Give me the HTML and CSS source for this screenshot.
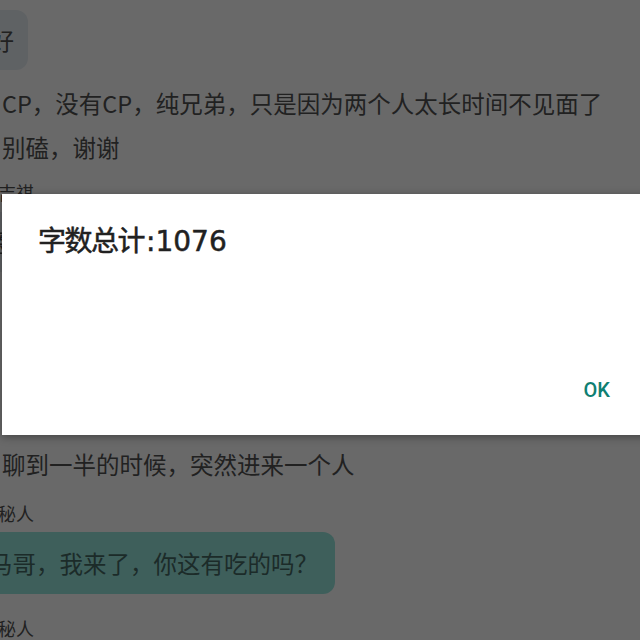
FILE: index.html
```html
<!DOCTYPE html>
<html lang="zh-CN">
<head>
    <meta charset="UTF-8">
    <meta name="viewport" content="width=device-width, initial-scale=1.0">
    <title>字数统计</title>
    <link rel="stylesheet" href="styles.css">
</head>
<body>
    <div class="chat">
        <div class="bubble bubble-gray first">你好</div>
        <p class="line line-a">CP，没有CP，纯兄弟，只是因为两个人太长时间不见面了</p>
        <p class="line line-b">别磕，谢谢</p>
        <div class="name name-a">张吉祺</div>
        <div class="bubble bubble-gray hidden-row">嗯</div>
        <p class="line line-c">然后他们两个就开始聊天</p>
        <p class="line line-d">聊到一半的时候，突然进来一个人</p>
        <div class="name name-b">神秘人</div>
        <div class="bubble bubble-teal">马哥，我来了，你这有吃的吗？</div>
        <div class="name name-c">神秘人</div>
    </div>

    <div class="scrim"></div>

    <div class="dialog">
        <div class="dialog-title"><span class="title-cjk">字数总计</span>:1076</div>
        <div class="dialog-actions">
            <span class="dialog-button">OK</span>
        </div>
    </div>
</body>
</html>
```

FILE: styles.css
```css
body, html {
    margin: 0;
    padding: 0;
    width: 640px;
    height: 640px;
    overflow: hidden;
    background-color: #ffffff;
    font-family: 'Noto Sans CJK SC', 'Noto Sans', sans-serif;
}
.chat {
    display: flex;
    flex-direction: column;
    align-items: flex-start;
    padding-left: 2px;
    color: #525252;
}
.bubble {
    font-size: 23.5px;
    line-height: 32px;
    border-radius: 12px;
    white-space: nowrap;
}
.bubble-gray {
    background-color: #e7eef3;
    padding: 14px 14px;
}
.bubble.first {
    margin-top: 10px;
    margin-left: -49px;
}
.bubble-teal {
    background-color: #98e6de;
    color: #456a65;
    padding: 15px 17px 15px 20px;
    margin-left: -33px;
    margin-top: 7px;
}
.line {
    margin: 0;
    font-size: 23.5px;
    line-height: 32px;
    white-space: nowrap;
}
.line-a {
    margin-top: 17px;
}
.line-b {
    margin-top: 12px;
}
.line-c {
    margin-top: 14px;
}
.line-d {
    margin-top: 130px;
}
.name {
    font-size: 18px;
    line-height: 24px;
    white-space: nowrap;
}
.name-a {
    margin-top: 17px;
    margin-left: -22px;
}
.name-b {
    margin-top: 21px;
    margin-left: -22px;
}
.name-c {
    margin-top: 22px;
    margin-left: -22px;
}
.hidden-row {
    margin-top: 8px;
    margin-left: -30px;
}
.scrim {
    position: absolute;
    top: 0;
    left: 0;
    width: 640px;
    height: 640px;
    background-color: rgba(0, 0, 0, 0.59);
}
.dialog {
    position: absolute;
    top: 194px;
    left: 2px;
    right: -22px;
    height: 241px;
    background-color: #ffffff;
    box-shadow: 0 2px 8px rgba(0, 0, 0, 0.35);
    display: flex;
    flex-direction: column;
    justify-content: space-between;
    box-sizing: border-box;
    padding: 29px 52px 33px 36px;
}
.dialog-title {
    font-family: 'DejaVu Sans', 'Noto Sans CJK SC', sans-serif;
    font-size: 28px;
    line-height: 38px;
    font-weight: 400;
    color: #212121;
    -webkit-text-stroke: 0.5px #212121;
}
.title-cjk {
    letter-spacing: -1.5px;
    margin-right: 2px;
}
.dialog-actions {
    display: flex;
    justify-content: flex-end;
}
.dialog-button {
    font-family: 'Roboto', sans-serif;
    font-size: 20px;
    line-height: 24px;
    font-weight: 500;
    color: #0f7f72;
}
```
